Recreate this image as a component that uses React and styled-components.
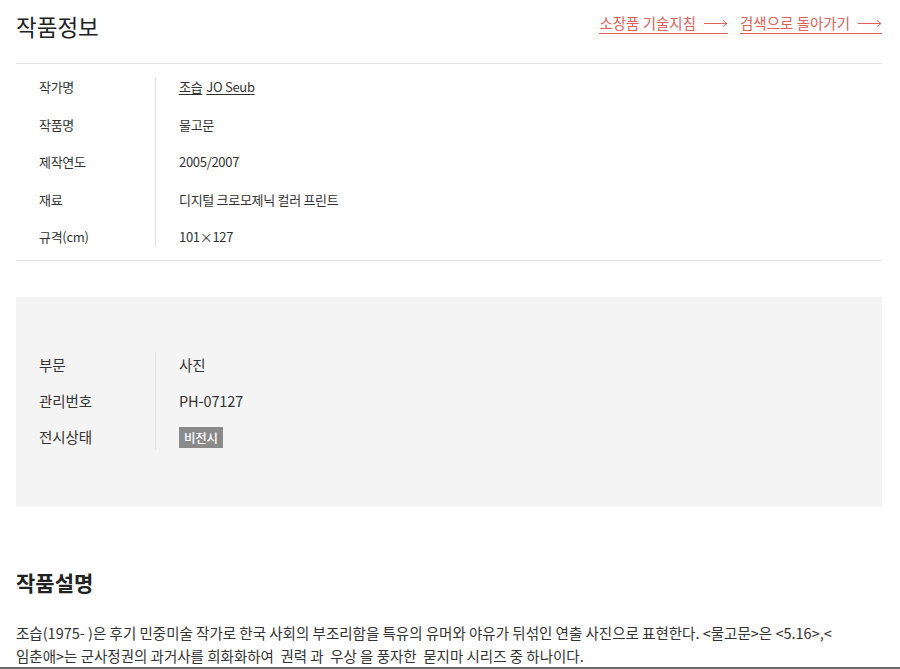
import React from "react";
import styled, { createGlobalStyle } from "styled-components";

const GlobalStyle = createGlobalStyle`
  body {
    margin: 0;
    background: #ffffff;
    font-family: "Noto Sans CJK KR", "Noto Sans", sans-serif;
    color: #333333;
  }
`;

const Page = styled.div`
  padding: 0 18px 0 16px;
`;

const Header = styled.header`
  display: flex;
  align-items: center;
  justify-content: space-between;
  height: 52px;
  padding-bottom: 11px;
`;

const Title = styled.h1`
  margin: 0;
  font-size: 22.5px;
  font-weight: 400;
  line-height: 28px;
  color: #222222;
`;

const Links = styled.nav`
  display: flex;
  gap: 12px;
  margin-top: -4px;
`;

const ArrowLink = styled.a`
  display: flex;
  align-items: center;
  gap: 8px;
  font-size: 14.5px;
  line-height: 18px;
  color: #e0605a;
  text-decoration: none;
  border-bottom: 1px solid #e0605a;
  padding-bottom: 1px;
`;

const InfoTable = styled.section`
  display: flex;
  border-top: 1px solid #e6e6e6;
  border-bottom: 1px solid #e6e6e6;
  padding: 14px 0 14px;
`;

const GrayBox = styled.section`
  display: flex;
  margin-top: 36px;
  background: #f4f4f4;
  padding: 55px 0 57px;
`;

const LabelCol = styled.div`
  display: flex;
  flex-direction: column;
  gap: ${p => p.$gap}px;
  width: 116px;
  padding-left: 23px;
  border-right: 1px solid #e2e2e2;
`;

const ValueCol = styled.div`
  display: flex;
  flex-direction: column;
  align-items: flex-start;
  gap: ${p => p.$gap}px;
  padding-left: 23px;
`;

const Cell = styled.div`
  font-size: ${p => (p.$big ? "14.5px" : "13px")};
  letter-spacing: ${p => (p.$big ? "-0.1px" : "-0.3px")};
  line-height: ${p => (p.$big ? "26px" : "18px")};
  height: ${p => (p.$big ? "26px" : "18px")};
  color: #333333;
  display: flex;
  align-items: center;
  gap: 4px;

  a {
    color: #333333;
    text-decoration: underline;
    text-underline-offset: 2px;
  }
`;

const Badge = styled.span`
  display: inline-block;
  background: #8a8a8a;
  color: #ffffff;
  font-size: 12.5px;
  font-weight: 500;
  line-height: 21px;
  padding: 0 5px;
  letter-spacing: -0.3px;
`;

const SubTitle = styled.h2`
  margin: 61px 0 0;
  font-size: 21px;
  font-weight: 700;
  line-height: 28px;
  color: #222222;
`;

const Description = styled.p`
  margin: 25px 0 0;
  font-size: 14.5px;
  letter-spacing: 0;
  line-height: 23px;
  color: #333333;
  white-space: nowrap;
`;

const BottomEdge = styled.div`
  position: fixed;
  left: 0;
  right: 0;
  bottom: 0;
  height: 2px;
  background: #6a6a6a;
`;

const LongArrow = () => (
  <svg width="24" height="9" viewBox="0 0 24 9" fill="none">
    <path d="M0 4.5H23M19 1.5L23 4.5L19 7.5" stroke="#e0605a" strokeWidth="1" />
  </svg>
);

const info = [
  ["작가명", null],
  ["작품명", "물고문"],
  ["제작연도", "2005/2007"],
  ["재료", "디지털 크로모제닉 컬러 프린트"],
  ["규격(cm)", "101×127"],
];

const manage = [
  ["부문", "사진"],
  ["관리번호", "PH-07127"],
  ["전시상태", null],
];

export default function App() {
  return (
    <>
      <GlobalStyle />
      <Page>
        <Header>
          <Title>작품정보</Title>
          <Links>
            <ArrowLink href="#">
              소장품 기술지침 <LongArrow />
            </ArrowLink>
            <ArrowLink href="#">
              검색으로 돌아가기 <LongArrow />
            </ArrowLink>
          </Links>
        </Header>

        <InfoTable>
          <LabelCol $gap={19.5}>
            {info.map(([label]) => (
              <Cell key={label}>{label}</Cell>
            ))}
          </LabelCol>
          <ValueCol $gap={19.5}>
            {info.map(([label, value]) => (
              <Cell key={label}>
                {value ?? (
                  <>
                    <a href="#">조습</a>
                    <a href="#">JO Seub</a>
                  </>
                )}
              </Cell>
            ))}
          </ValueCol>
        </InfoTable>

        <GrayBox>
          <LabelCol $gap={10}>
            {manage.map(([label]) => (
              <Cell $big key={label}>
                {label}
              </Cell>
            ))}
          </LabelCol>
          <ValueCol $gap={10}>
            {manage.map(([label, value]) => (
              <Cell $big key={label}>
                {value ?? <Badge>비전시</Badge>}
              </Cell>
            ))}
          </ValueCol>
        </GrayBox>

        <SubTitle>작품설명</SubTitle>
        <Description>
          조습(1975- )은 후기 민중미술 작가로 한국 사회의 부조리함을 특유의 유머와 야유가 뒤섞인 연출 사진으로 표현한다. &lt;물고문&gt;은 &lt;5.16&gt;,&lt;
          <br />
          임춘애&gt;는 군사정권의 과거사를 희화화하여 &nbsp;권력 과 &nbsp;우상 을 풍자한 &nbsp;묻지마 시리즈 중 하나이다.
        </Description>
      </Page>
      <BottomEdge />
    </>
  );
}
